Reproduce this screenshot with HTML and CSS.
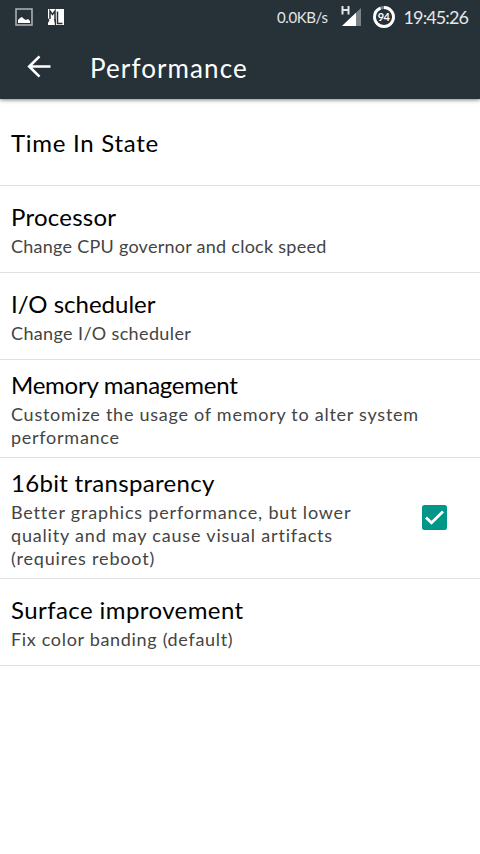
FILE: index.html
```html
<!DOCTYPE html>
<html lang="en">
<head>
    <meta charset="UTF-8">
    <meta name="viewport" content="width=device-width, initial-scale=1.0">
    <title>Performance</title>
    <link rel="stylesheet" href="styles.css">
</head>
<body>
    <header class="header">
        <div class="status-bar">
            <svg class="picture-icon" width="18" height="18" viewBox="0 0 18 18">
                <rect x="1" y="1" width="16" height="16" fill="none" stroke="#a9afb2" stroke-width="1.6"/>
                <path d="M3 15v-3l2-2 2-1 2 2 2 1 2-1 2 2v2z" fill="#fff"/>
            </svg>
            <svg class="ml-icon" width="16" height="16" viewBox="0 0 16 16">
                <rect width="16" height="16" fill="#fff"/>
                <path d="M2 10V2l2.500 3.500L7 2v8" fill="none" stroke="#263238" stroke-width="1.500"/>
                <path d="M9.500 2.500v12h5" fill="none" stroke="#263238" stroke-width="1.500"/>
                <path d="M0 9l1.500 2L0 14zM6 10h2v6H7z" fill="#263238"/>
            </svg>
            <span class="speed">0.0KB/s</span>
            <svg class="signal-icon" width="20" height="22" viewBox="0 0 20 22">
                <path d="M20 3v18H1z" fill="#7d8488"/>
                <path d="M15 7.700v13.300H1z" fill="#fff"/>
                <path d="M1.500 1v8.500M7.500 1v8.500M1.500 5h6" fill="none" stroke="#e4e6e7" stroke-width="2"/>
            </svg>
            <div class="battery">
                <svg width="22" height="22" viewBox="0 0 22 22">
                    <circle cx="11" cy="11" r="9.500" fill="none" stroke="#7d8488" stroke-width="2.800"/>
                    <circle cx="11" cy="11" r="9.500" fill="none" stroke="#fff" stroke-width="2.800" pathLength="100" stroke-dasharray="94 6" transform="rotate(-90 11 11)"/>
                </svg>
                <span class="battery-level">94</span>
            </div>
            <span class="clock">19:45:26</span>
        </div>
        <div class="toolbar">
            <svg class="back-icon" width="24" height="24" viewBox="0 0 24 24">
                <path d="M23.500 11.500H2M12.500 1.300L2.200 11.500l10.300 10.200" fill="none" stroke="#fff" stroke-width="2.600"/>
            </svg>
            <h1>Performance</h1>
        </div>
    </header>

    <main class="list">
        <div class="item">
            <div class="text">
                <h2 class="time">Time In State</h2>
            </div>
        </div>
        <div class="item">
            <div class="text">
                <h2 class="processor">Processor</h2>
                <p class="cpu">Change CPU governor and clock speed</p>
            </div>
        </div>
        <div class="item">
            <div class="text">
                <h2 class="scheduler">I/O scheduler</h2>
                <p class="io">Change I/O scheduler</p>
            </div>
        </div>
        <div class="item">
            <div class="text">
                <h2 class="memory">Memory management</h2>
                <p class="usage">Customize the usage of memory to alter system<br>performance</p>
            </div>
        </div>
        <div class="item">
            <div class="text">
                <h2 class="transparency">16bit transparency</h2>
                <p class="graphics">Better graphics performance, but lower<br>quality and may cause visual artifacts<br>(requires reboot)</p>
            </div>
            <svg class="checkbox" width="25" height="25" viewBox="0 0 25 25">
                <rect width="25" height="25" rx="2.500" fill="#009688"/>
                <path d="M4 12.500l5.500 5.300L21 6.500" fill="none" stroke="#fff" stroke-width="2.700"/>
            </svg>
        </div>
        <div class="item">
            <div class="text">
                <h2 class="surface">Surface improvement</h2>
                <p class="banding">Fix color banding (default)</p>
            </div>
        </div>
    </main>
</body>
</html>
```
FILE: styles.css
```css
* {
    box-sizing: border-box;
}
body {
    margin: 0;
    background-color: #fff;
    font-family: Lato, sans-serif;
}
h1, h2, p {
    margin: 0;
    font-weight: normal;
    white-space: nowrap;
}
svg {
    display: block;
    flex: none;
}
.header {
    height: 99px;
    background-color: #263238;
    color: #fff;
    box-shadow: 0 1px 4px rgba(0, 0, 0, 0.5);
}
.status-bar {
    display: flex;
    align-items: center;
    height: 34px;
    padding: 0 12px 0 15px;
}
.ml-icon {
    margin-left: 15px;
}
.speed {
    margin-left: auto;
    font-size: 15px;
    letter-spacing: -0.4px;
    color: #e4e6e7;
}
.signal-icon {
    margin: -3px 0 0 13px;
}
.battery {
    position: relative;
    margin-left: 12px;
}
.battery-level {
    position: absolute;
    inset: 0;
    font-size: 11px;
    font-weight: bold;
    letter-spacing: -0.5px;
    line-height: 22px;
    text-align: center;
}
.clock {
    margin-left: 9px;
    font-size: 18px;
    letter-spacing: -0.9px;
    color: #e4e6e7;
}
.toolbar {
    display: flex;
    align-items: center;
    height: 65px;
    padding-left: 27px;
}
.toolbar h1 {
    margin-left: 39px;
    padding-top: 2px;
    font-size: 26px;
    letter-spacing: 1.1px;
}
.item {
    display: flex;
    align-items: center;
    justify-content: space-between;
    min-height: 87px;
    padding: 8px 33px 8px 11px;
    border-bottom: 1px solid #e0e0e0;
}
.item h2 {
    margin-bottom: 1px;
    font-size: 24px;
    line-height: 34px;
    color: #000;
}
.item p {
    font-size: 18px;
    line-height: 23px;
    color: #444;
}
.item .time {
    margin: 2px 0 0;
    letter-spacing: 0.72px;
}
.processor {
    letter-spacing: 0.25px;
}
.memory {
    letter-spacing: -0.25px;
}
.transparency {
    letter-spacing: 0.3px;
}
.surface {
    letter-spacing: 0.42px;
}
.cpu {
    letter-spacing: 0.26px;
}
.io {
    letter-spacing: 0.37px;
}
.usage {
    letter-spacing: 0.74px;
}
.graphics {
    letter-spacing: 0.82px;
}
.banding {
    letter-spacing: 0.68px;
}
.checkbox {
    margin-bottom: 1px;
}
```
